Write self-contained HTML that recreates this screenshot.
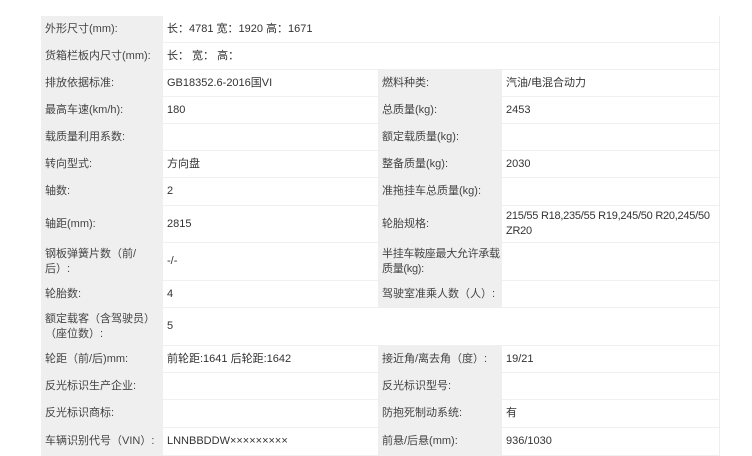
<!DOCTYPE html>
<html><head><meta charset="utf-8"><style>
body{margin:0;width:752px;height:456px;background:#fff;position:relative;overflow:hidden;font-family:"Liberation Sans","Noto Sans CJK SC",sans-serif;font-size:11px;color:#333}
.c{position:absolute;box-sizing:border-box;display:flex;align-items:center;line-height:15px;border-bottom:1px solid #f0f0f0}
.l{background:#efefef;padding-left:4px;padding-right:12px;border-bottom:1px solid #efefef;color:#444}
.v{background:#fff;padding-left:4px}
.rl{position:absolute;left:719px;top:16px;width:1px;height:440px;background:#eee}
</style></head><body>
<div class="rl"></div>
<div class="c l" style="left:41px;top:16px;width:122px;height:27px">外形尺寸(mm):</div>
<div class="c v" style="left:163px;top:16px;width:556px;height:27px">长：4781 宽：1920 高：1671</div>
<div class="c l" style="left:41px;top:43px;width:122px;height:27px;padding-right:0">货箱栏板内尺寸(mm):</div>
<div class="c v" style="left:163px;top:43px;width:556px;height:27px">长：&nbsp;宽：&nbsp;高：</div>

<div class="c l" style="left:41px;top:70px;width:122px;height:27px">排放依据标准:</div>
<div class="c v" style="left:163px;top:70px;width:215px;height:27px">GB18352.6-2016国VI</div>
<div class="c l" style="left:378px;top:70px;width:124px;height:27px">燃料种类:</div>
<div class="c v" style="left:502px;top:70px;width:217px;height:27px">汽油/电混合动力</div>

<div class="c l" style="left:41px;top:97px;width:122px;height:27px">最高车速(km/h):</div>
<div class="c v" style="left:163px;top:97px;width:215px;height:27px">180</div>
<div class="c l" style="left:378px;top:97px;width:124px;height:27px">总质量(kg):</div>
<div class="c v" style="left:502px;top:97px;width:217px;height:27px">2453</div>

<div class="c l" style="left:41px;top:124px;width:122px;height:27px">载质量利用系数:</div>
<div class="c v" style="left:163px;top:124px;width:215px;height:27px"></div>
<div class="c l" style="left:378px;top:124px;width:124px;height:27px">额定载质量(kg):</div>
<div class="c v" style="left:502px;top:124px;width:217px;height:27px"></div>

<div class="c l" style="left:41px;top:151px;width:122px;height:27px">转向型式:</div>
<div class="c v" style="left:163px;top:151px;width:215px;height:27px">方向盘</div>
<div class="c l" style="left:378px;top:151px;width:124px;height:27px">整备质量(kg):</div>
<div class="c v" style="left:502px;top:151px;width:217px;height:27px">2030</div>

<div class="c l" style="left:41px;top:178px;width:122px;height:28px">轴数:</div>
<div class="c v" style="left:163px;top:178px;width:215px;height:28px">2</div>
<div class="c l" style="left:378px;top:178px;width:124px;height:28px;padding-right:0">准拖挂车总质量(kg):</div>
<div class="c v" style="left:502px;top:178px;width:217px;height:28px"></div>

<div class="c l" style="left:41px;top:206px;width:122px;height:37px">轴距(mm):</div>
<div class="c v" style="left:163px;top:206px;width:215px;height:37px">2815</div>
<div class="c l" style="left:378px;top:206px;width:124px;height:37px">轮胎规格:</div>
<div class="c v" style="left:502px;top:206px;width:217px;height:37px;letter-spacing:-0.25px">215/55 R18,235/55 R19,245/50 R20,245/50 ZR20</div>

<div class="c l" style="left:41px;top:243px;width:122px;height:38px">钢板弹簧片数（前/后）:</div>
<div class="c v" style="left:163px;top:243px;width:215px;height:38px">-/-</div>
<div class="c l" style="left:378px;top:243px;width:124px;height:38px;padding-right:0;letter-spacing:-0.3px"><span style="white-space:nowrap">半挂车鞍座最大允许承载<br>质量(kg):</span></div>
<div class="c v" style="left:502px;top:243px;width:217px;height:38px"></div>

<div class="c l" style="left:41px;top:281px;width:122px;height:27px">轮胎数:</div>
<div class="c v" style="left:163px;top:281px;width:215px;height:27px">4</div>
<div class="c l" style="left:378px;top:281px;width:124px;height:27px;padding-right:0">驾驶室准乘人数（人）:</div>
<div class="c v" style="left:502px;top:281px;width:217px;height:27px"></div>

<div class="c l" style="left:41px;top:308px;width:122px;height:38px">额定载客（含驾驶员）（座位数）:</div>
<div class="c v" style="left:163px;top:308px;width:556px;height:38px">5</div>

<div class="c l" style="left:41px;top:346px;width:122px;height:27px">轮距（前/后)mm:</div>
<div class="c v" style="left:163px;top:346px;width:215px;height:27px">前轮距:1641 后轮距:1642</div>
<div class="c l" style="left:378px;top:346px;width:124px;height:27px;padding-right:0">接近角/离去角（度）:</div>
<div class="c v" style="left:502px;top:346px;width:217px;height:27px">19/21</div>

<div class="c l" style="left:41px;top:373px;width:122px;height:27px">反光标识生产企业:</div>
<div class="c v" style="left:163px;top:373px;width:215px;height:27px"></div>
<div class="c l" style="left:378px;top:373px;width:124px;height:27px">反光标识型号:</div>
<div class="c v" style="left:502px;top:373px;width:217px;height:27px"></div>

<div class="c l" style="left:41px;top:400px;width:122px;height:28px">反光标识商标:</div>
<div class="c v" style="left:163px;top:400px;width:215px;height:28px"></div>
<div class="c l" style="left:378px;top:400px;width:124px;height:28px">防抱死制动系统:</div>
<div class="c v" style="left:502px;top:400px;width:217px;height:28px">有</div>

<div class="c l" style="left:41px;top:428px;width:122px;height:28px;padding-right:0">车辆识别代号（VIN）:</div>
<div class="c v" style="left:163px;top:428px;width:215px;height:28px">LNNBBDDW×××××××××</div>
<div class="c l" style="left:378px;top:428px;width:124px;height:28px">前悬/后悬(mm):</div>
<div class="c v" style="left:502px;top:428px;width:217px;height:28px">936/1030</div>
</body></html>
